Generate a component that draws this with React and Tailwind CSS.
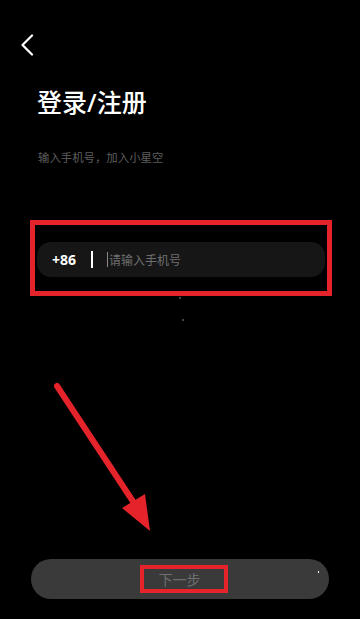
const RED = "#e5232b";

export default function App() {
  return (
    <div
      className="relative flex h-[619px] w-[360px] flex-col overflow-hidden bg-black"
      style={{ fontFamily: '"Noto Sans CJK SC", "Noto Sans", sans-serif' }}
    >
      <div className="pl-[20px] pt-[34px]">
        <svg width="14" height="22" viewBox="0 0 14 22" fill="none">
          <polyline points="12,1.5 2.5,11 12,20.5" stroke="#ffffff" strokeWidth="2.2" strokeLinecap="round" strokeLinejoin="round" />
        </svg>
      </div>

      <h1
        className="ml-[37px] mt-[30px] text-[25px] font-medium leading-[32px] text-white"
        style={{ fontFamily: '"Noto Sans", "Noto Sans CJK SC", sans-serif' }}
      >
        登录/注册
      </h1>
      <p className="ml-[38px] mt-[30px] text-[11.4px] leading-[18px] text-[#5e5e5e]">输入手机号，加入小星空</p>

      <div className="ml-[30px] mt-[54px] w-[302px] border-[5px] border-[#e5232b] px-[2px] pb-[14px] pt-[17px]">
        <div className="flex h-[35px] items-center rounded-[14px] bg-[#161616] pl-[15px]">
          <span className="text-[14px] font-bold text-white" style={{ fontFamily: '"Noto Sans", sans-serif' }}>+86</span>
          <span className="ml-[15px] h-[17px] w-[2px] bg-white"></span>
          <span className="ml-[14px] h-[15px] w-px bg-[#888]"></span>
          <span className="ml-[1px] text-[12px] text-[#6f6f6f]">请输入手机号</span>
        </div>
      </div>

      <div className="mt-auto px-[31px] pb-[20px]">
        <div className="relative flex h-[40px] items-center justify-center rounded-full bg-[#3a3a3a]">
          <span className="ml-[7px] border-[4px] border-[#e5232b] pl-[15px] pr-[23px] text-[14px] leading-[20px] text-[#6e6e6e]">下一步</span>
          <span className="absolute right-[10px] top-[12px] h-[1.5px] w-[1.5px] bg-white"></span>
        </div>
      </div>

      <span className="absolute left-[179px] top-[297px] h-[2px] w-[2px] bg-[#444]"></span>
      <span className="absolute left-[182px] top-[319px] h-[2px] w-[2px] bg-[#444]"></span>

      <svg className="pointer-events-none absolute left-0 top-0" width="360" height="619" viewBox="0 0 360 619">
        <line x1="57" y1="386" x2="136" y2="506" stroke={RED} strokeWidth="6" strokeLinecap="round" />
        <polygon points="150,531 122,508 145,494" fill={RED} />
      </svg>
    </div>
  );
}
